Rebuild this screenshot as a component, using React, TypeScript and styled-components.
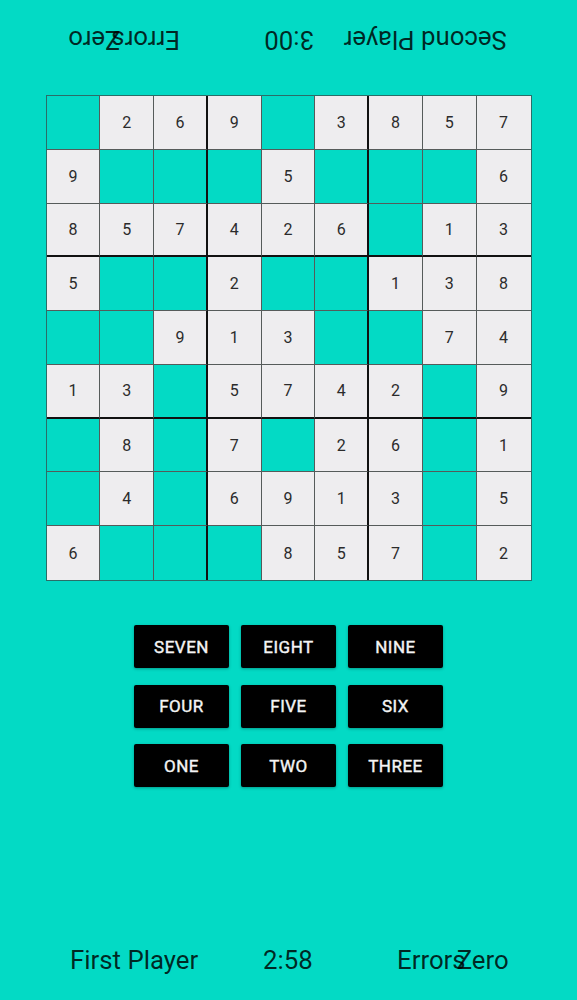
import {FC} from "react";
import styled, {createGlobalStyle} from "styled-components";

const teal = "#03DAC5";

const GlobalStyle = createGlobalStyle`
  html, body {
    margin: 0;
    padding: 0;
    background: ${teal};
  }
  body {
    font-family: Roboto, "Liberation Sans", sans-serif;
  }
`;

const Screen = styled.div`
  width: 577px;
  height: 1000px;
  display: flex;
  flex-direction: column;
  align-items: center;
  background: ${teal};
  overflow: hidden;
`;

const StatusBar = styled.div<{flipped?: boolean}>`
  box-sizing: border-box;
  width: 100%;
  height: 30px;
  padding-left: 70px;
  display: grid;
  grid-template-columns: 193px 134px auto;
  font-size: 25.8px;
  line-height: 30px;
  color: rgba(0, 0, 0, 0.82);
  white-space: nowrap;
  transform: ${(p) => (p.flipped ? "rotate(180deg)" : "none")};
  margin-top: ${(p) => (p.flipped ? "25px" : "auto")};
  margin-bottom: ${(p) => (p.flipped ? "0" : "25.5px")};
`;

const Errors = styled.div`
  display: flex;
`;

// "Zero" slides back over the end of "Errors", as in the app
const ErrorsValue = styled.span`
  margin-left: -9px;
`;

const Board = styled.div`
  box-sizing: border-box;
  margin-top: 40px;
  width: 486px;
  height: 486px;
  border: 1px solid #2a6e68;
  display: grid;
  grid-template-columns: repeat(9, 1fr);
  grid-template-rows: repeat(9, 1fr);
`;

const lineFor = (i: number) =>
  i === 8 ? "none" : i === 2 || i === 5 ? "2px solid #111" : "1px solid #555b5a";

const Cell = styled.div<{row: number; col: number; filled: boolean}>`
  box-sizing: border-box;
  display: flex;
  align-items: center;
  justify-content: center;
  background: ${(p) => (p.filled ? "#EEEDEF" : teal)};
  border-right: ${(p) => lineFor(p.col)};
  border-bottom: ${(p) => lineFor(p.row)};
  font-size: 16px;
  color: #2b2b2b;
`;

const Keypad = styled.div`
  margin-top: 44px;
  display: grid;
  grid-template-columns: repeat(3, 95px);
  column-gap: 12px;
  row-gap: 16.5px;
`;

const Key = styled.button`
  height: 43px;
  border: none;
  border-radius: 2px;
  background: #000;
  color: #f4f4f4;
  font-family: Roboto, "Liberation Sans", sans-serif;
  font-weight: 400;
  font-size: 17px;
  letter-spacing: 0.5px;
  -webkit-text-stroke: 0.4px #f4f4f4;
  padding: 0;
  box-shadow: 0 1px 3px rgba(0, 0, 0, 0.3);
`;

const board = [
  [0, 2, 6, 9, 0, 3, 8, 5, 7],
  [9, 0, 0, 0, 5, 0, 0, 0, 6],
  [8, 5, 7, 4, 2, 6, 0, 1, 3],
  [5, 0, 0, 2, 0, 0, 1, 3, 8],
  [0, 0, 9, 1, 3, 0, 0, 7, 4],
  [1, 3, 0, 5, 7, 4, 2, 0, 9],
  [0, 8, 0, 7, 0, 2, 6, 0, 1],
  [0, 4, 0, 6, 9, 1, 3, 0, 5],
  [6, 0, 0, 0, 8, 5, 7, 0, 2],
];

const keys = ["SEVEN", "EIGHT", "NINE", "FOUR", "FIVE", "SIX", "ONE", "TWO", "THREE"];

interface PlayerBarProps {
  name: string;
  time: string;
  flipped?: boolean;
}

const PlayerBar: FC<PlayerBarProps> = (props) => (
  <StatusBar flipped={props.flipped}>
    <div>{props.name}</div>
    <div>{props.time}</div>
    <Errors>
      <span>Errors</span>
      <ErrorsValue>Zero</ErrorsValue>
    </Errors>
  </StatusBar>
);

const App: FC = () => {
  return (
    <Screen>
      <GlobalStyle />
      <PlayerBar name="Second Player" time="3:00" flipped />
      <Board>
        {board.map((line, r) =>
          line.map((value, c) => (
            <Cell key={`${r}-${c}`} row={r} col={c} filled={value !== 0}>
              {value !== 0 ? value : ""}
            </Cell>
          ))
        )}
      </Board>
      <Keypad>
        {keys.map((k) => (
          <Key key={k}>{k}</Key>
        ))}
      </Keypad>
      <PlayerBar name="First Player" time="2:58" />
    </Screen>
  );
};

export default App;
